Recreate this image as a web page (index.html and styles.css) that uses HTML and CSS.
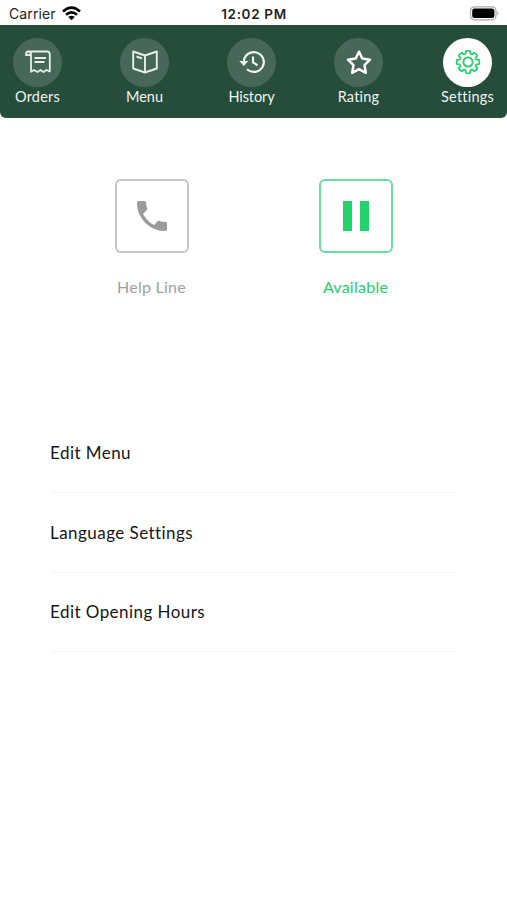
FILE: index.html
```
<!DOCTYPE html>
<html lang="en">
<head>
<meta charset="utf-8">
<title>Settings</title>
<link rel="stylesheet" href="styles.css">
</head>
<body>
<header class="status">
  <div class="carrier"><span class="carrier-name">Carrier</span>
    <svg width="19" height="15" viewBox="0 0 19 15"><g fill="none" stroke="#000" stroke-width="2.6"><path d="M1 5.500Q9.500-2.300 18 5.500"/><path d="M4 8.800Q9.500 3.900 15 8.800"/></g><path d="M6.300 11Q9.500 8.300 12.700 11L9.500 14.200Z"/></svg>
  </div>
  <div class="time">12:02 PM</div>
  <svg class="battery" width="31" height="15" viewBox="0 0 31 15"><rect x="1.500" y=".8" width="25.500" height="13" rx="4" fill="#fff" stroke="#aaa" stroke-width="1.200"/><rect x="3.200" y="2.500" width="22.200" height="9.600" rx="2.500"/><path d="M28.300 5Q30.500 7.300 28.300 9.600Z" fill="#aaa"/></svg>
</header>
<nav class="nav">
  <a class="tab"><span class="disc"><svg width="26" height="24" viewBox="0 0 26 24"><g fill="none" stroke="#e5eee9" stroke-width="1.800" stroke-linejoin="round"><path d="M3 1.500H22Q24.800 1.500 24.800 4.500V21.500L21.500 20L18.500 22L15.400 20L12.400 22L9 20L6 21.700V4Q5.500 1.500 3 1.500Q.9 1.700 .9 5H6"/><path d="M9.500 8H21M9.500 12H19.500"/></g></svg></span><span class="label">Orders</span></a>
  <a class="tab"><span class="disc"><svg width="26" height="24" viewBox="0 0 26 24"><g fill="none" stroke="#e5eee9" stroke-width="1.900" stroke-linejoin="round"><path d="M1.200 1.500L13 5.500L24.800 1.500V18.500L13 22.500L1.200 18.500ZM13 5.500V22"/><path d="M4.500 6.500L10 8.500"/></g></svg></span><span class="label menu">Menu</span></a>
  <a class="tab"><span class="disc"><svg width="26" height="24" viewBox="0 0 26 24"><g fill="none" stroke="#f2f6f4" stroke-width="2.200"><path d="M4.800 12A10 9.900 0 1 1 8 19.300"/><path d="M14 6.500V12.500L18.500 15.200"/></g><path d="M.3 11H9.300L4.800 16Z" fill="#f2f6f4"/></svg></span><span class="label history">History</span></a>
  <a class="tab"><span class="disc"><svg width="26" height="25" viewBox="0 0 26 25"><path d="M13 1.700L16.300 8.500L24 9.700L18.500 15.100L19.800 22.800L13 19.200L6.200 22.800L7.500 15.100L2 9.700L9.700 8.500Z" fill="none" stroke="#fff" stroke-width="2.500" stroke-linejoin="round"/></svg></span><span class="label">Rating</span></a>
  <a class="tab"><span class="disc active"><svg width="26" height="26" viewBox="-13 -13 26 26"><g fill="none" stroke="#27d06c" stroke-width="1.800" stroke-linejoin="round"><path d="M-2.140-10.990Q0-11.800 2.140-10.990L2.430-8.460Q3.100-7.300 4.270-7.700L6.260-9.290Q8.300-8.300 9.290-6.260L7.700-4.270Q7.300-3.100 8.460-2.430L10.990-2.140Q11.800 0 10.990 2.140L8.460 2.430Q7.300 3.100 7.700 4.270L9.290 6.260Q8.300 8.300 6.260 9.290L4.270 7.700Q3.100 7.300 2.430 8.460L2.140 10.990Q0 11.800-2.140 10.990L-2.430 8.460Q-3.100 7.300-4.270 7.700L-6.260 9.290Q-8.300 8.300-9.290 6.260L-7.700 4.270Q-7.300 3.100-8.460 2.430L-10.990 2.140Q-11.800 0-10.990-2.140L-8.460-2.430Q-7.300-3.100-7.700-4.270L-9.290-6.260Q-8.300-8.300-6.260-9.290L-4.270-7.700Q-3.100-7.300-2.430-8.460Z"/><circle r="4.600"/></g></svg></span><span class="label">Settings</span></a>
</nav>
<main>
  <section class="actions">
    <div class="action help"><div class="box"><svg width="30" height="30" viewBox="3 3 18 18"><path fill="#9b9b9b" d="M6.620 10.790c1.440 2.830 3.760 5.140 6.590 6.590l2.200-2.200c.27-.27.67-.36 1.020-.24 1.120.37 2.330.57 3.570.57.55 0 1 .45 1 1V20c0 .55-.45 1-1 1-9.390 0-17-7.610-17-17 0-.55.45-1 1-1h3.500c.55 0 1 .45 1 1 0 1.250.2 2.450.57 3.570.11.35.03.74-.25 1.020l-2.200 2.200z"/></svg></div><span class="caption">Help Line</span></div>
    <div class="action available"><div class="box"><svg width="26" height="30" viewBox="0 0 26 30"><path fill="#24d26b" d="M0 0H9V30H0ZM17 0H26V30H17Z"/></svg></div><span class="caption">Available</span></div>
  </section>
  <section class="list">
    <div class="row"><span class="edit-menu">Edit Menu</span></div>
    <div class="row"><span class="language">Language Settings</span></div>
    <div class="row"><span class="hours">Edit Opening Hours</span></div>
  </section>
</main>
</body>
</html>
```
FILE: styles.css
```
* { box-sizing: border-box; }
body { margin: 0; height: 900px; background: #fff; font-family: Lato, sans-serif; overflow: hidden; }
svg { display: block; flex: none; }
span { white-space: nowrap; }
.status { height: 25px; padding: 0 7px 0 9px; display: grid; grid-template-columns: 1fr auto 1fr; align-items: center; font-family: Inter, sans-serif; color: #222; }
.carrier { display: flex; align-items: center; gap: 6px; font-size: 14px; padding-top: 2px; }
.carrier svg { margin-top: -1px; }
.carrier-name { letter-spacing: .1px; }
.time { font-size: 13.5px; font-weight: 600; letter-spacing: .65px; margin-right: 1px; padding-top: 3px; }
.battery { justify-self: end; margin-top: 1px; }
.nav { height: 93px; padding: 13px 13px 0; display: flex; justify-content: space-between; background: #264d3b; border-radius: 0 0 6px 6px; }
.tab { display: flex; flex-direction: column; align-items: center; min-width: 49px; }
.tab:last-child { width: 53px; }
.disc { width: 49px; height: 49px; border-radius: 50%; background: #46675a; display: flex; align-items: center; justify-content: center; }
.disc svg { margin-top: -1px; }
.disc.active { background: #fff; }
.label { margin-top: 1px; color: #eef3f0; font-size: 14.5px; line-height: 18px; letter-spacing: .2px; }
.history { letter-spacing: -.1px; }
.menu { letter-spacing: 0; }
.actions { display: flex; justify-content: space-between; padding: 61px 114px 0; height: 295.500px; }
.action { width: 75px; display: flex; flex-direction: column; align-items: center; gap: 24px; color: #a0a0a0; }
.box { width: 74px; height: 74px; border: 2px solid #c4c4c4; border-radius: 6px; display: flex; align-items: center; justify-content: center; }
.caption { font-size: 16px; line-height: 20px; letter-spacing: .25px; }
.available { color: #2acb6d; }
.available .box { border-color: #6fdc9d; }
.list { padding: 0 51px; }
.row { height: 79.500px; display: flex; align-items: center; border-bottom: 1px solid #f4f4f4; font-size: 17px; letter-spacing: .45px; color: #151515; }
.row span { margin-left: -1px; }
```
